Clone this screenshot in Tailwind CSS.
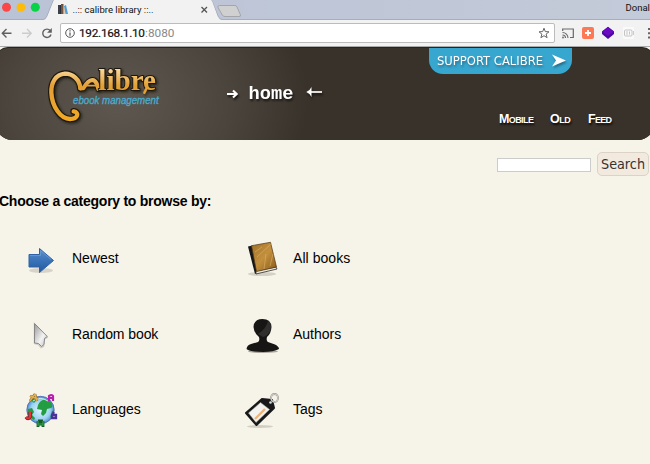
<!DOCTYPE html>
<html lang="en">
<head>
<meta charset="utf-8">
<title>..:: calibre library ::..</title>
<script src="https://cdn.jsdelivr.net/npm/@tailwindcss/browser@4"></script>
</head>
<body class="w-[650px] h-[464px] overflow-hidden bg-[#f6f3e8] font-['Liberation_Sans',Arial,sans-serif] text-black">

<!-- Tab strip -->
<div class="h-5 bg-linear-to-r from-[#bac3d6] to-[#c3cad8]">
  <svg class="block" width="650" height="20" viewBox="0 0 650 20">
    <circle cx="6.5" cy="7.3" r="4.5" fill="#fc4646"/><circle cx="21" cy="7.3" r="4.5" fill="#fdbc0b"/><circle cx="35.3" cy="7.3" r="4.5" fill="#08d348"/>
    <path d="M0 19.5H43Q46 19 47 16L53 1Q54-1 56-1H209Q211-1 212 1L218 16Q219 19 222 19.5H650" fill="none" stroke="#a7adb9"/>
    <path d="M44 20Q46 19 47.5 16L53.500 1L54 0H211L212 1L217.500 16Q219 19 221 20Z" fill="#f2f2f2"/>
    <path d="M219.500 5.500H235Q236.500 5.500 237 7L240.500 15Q241 16.500 239 16.500H225Q223 16.500 222.300 15L218 7.500Q217.300 5.500 219.500 5.500Z" fill="#d0d0d1" stroke="#a3a5aa"/>
    <path d="M58 5h3v9h-3z" fill="#26303c"/><path d="M61 4h2.500v10H61z" fill="#75482f"/><path d="M59 5v9M62 5v9" stroke="#8b7868" stroke-width=".5"/><path d="M64 6l2-1 2 9h-2.500z" fill="#4d9fdc"/><path d="M64 8v6" stroke="#c7a476"/>
    <path d="M201.500 7l5.500 5.500m0-5.500l-5.500 5.500" stroke="#555" stroke-width="1.300"/>
    <text x="72.500" y="13" textLength="81" lengthAdjust="spacingAndGlyphs" font-family="Roboto,sans-serif" font-size="9.500" fill="#111">..:: calibre library ::..</text>
    <text x="625.500" y="11" font-family="Roboto,sans-serif" font-size="9.500" fill="#111">Donald</text>
  </svg>
</div>

<!-- Address bar -->
<div class="flex h-[27px] items-center border-b border-[#aaa] bg-[#f2f2f2]">
  <svg class="shrink-0" width="60" height="26" viewBox="0 20 60 26" fill="none" stroke-width="1.400">
    <path d="M11.500 33.200H2.500M6.500 29L2.300 33.200L6.500 37.400" stroke="#606060"/>
    <path d="M22 33.200H31M27 29L31.200 33.200L27 37.400" stroke="#ccc"/>
    <path d="M50.300 30.700A4.200 4.200 0 1 0 51 34.500" stroke="#606060"/><path d="M51.800 28v4.700h-4.700z" fill="#606060"/>
  </svg>
  <div class="flex h-5 w-[495px] shrink-0 items-center rounded-[2px] border border-[#bcbcbc] bg-white pl-1">
    <svg class="shrink-0" width="10" height="10" viewBox="0 0 10 10"><circle cx="5" cy="5" r="4.300" fill="none" stroke="#555"/><path d="M5 2.300v1.200M5 4.500v3.300" stroke="#555" stroke-width="1.200"/></svg>
    <svg class="ml-1 shrink-0" width="110" height="18" font-family="Roboto,sans-serif" font-size="11.800"><text x="0" y="13" textLength="66" fill="#111" stroke="#111" stroke-width=".2">192.168.1.10</text><text x="66" y="13" textLength="29.500" fill="#888">:8080</text></svg>
    <svg class="ml-auto mr-1 shrink-0" width="12" height="12" viewBox="0 0 12 12"><path d="M6 1.200L7.300 4.600L11 4.800L8.100 7.100L9.100 10.700L6 8.700L2.900 10.700L3.900 7.100L1 4.800L4.700 4.600Z" fill="none" stroke="#666"/></svg>
  </div>
  <svg class="shrink-0" width="95" height="26" viewBox="555 20 95 26" fill="none">
    <path d="M562.700 31V29H573.300V37.500H570" stroke="#686868" stroke-width="1.200"/><path d="M562.500 32.500A5.500 5.500 0 0 1 568 38M562.500 35A3 3 0 0 1 565.500 38" stroke="#686868" stroke-width="1.100"/><circle cx="563" cy="37.500" r=".9" fill="#686868"/>
    <rect x="582" y="27" width="12" height="12" rx="2" fill="#fb7a55"/><path d="M588 30v6M585 33h6" stroke="#fff" stroke-width="1.800"/>
    <path d="M608 26.800L614 31.500V34L608 39L602 34V31.500Z" fill="#4c08a0"/><path d="M608 27L614 31.500L608 36L602 31.500Z" fill="#6a09c2"/>
    <rect x="623" y="27" width="11" height="12" rx="1" fill="#fafafa"/><rect x="624.500" y="30" width="7.500" height="6" rx="1" stroke="#c3c3c3"/><path d="M627 31v4M629.500 31.500v3" stroke="#c3c3c3"/><path d="M633.500 31v4" stroke="#ccc"/>
    <path d="M648 28h2v2h-2zM648 32.300h2v2h-2zM648 36.600h2v2h-2z" fill="#666"/>
  </svg>
</div>

<!-- Site header -->
<header class="-mx-1 flex h-[93px] rounded-b-[16px] rounded-t-[12px] border-t border-[#29231f] bg-[#39322b] bg-[radial-gradient(ellipse_190px_150px_at_122px_52px,#5e5850_0%,#4b443d_60%,#39322b_100%)]">
  <svg class="ml-[34px] mt-0.5 shrink-0" width="150" height="90" viewBox="0 0 450 270">
    <defs>
      <linearGradient id="gold" gradientUnits="userSpaceOnUse" x1="0" y1="60" x2="0" y2="215"><stop offset="0" stop-color="#f9d797"/><stop offset=".3" stop-color="#e3a034"/><stop offset="1" stop-color="#efa927"/></linearGradient>
      <filter id="soft" x="-20%" y="-20%" width="150%" height="150%"><feDropShadow dx="4" dy="4" stdDeviation="3" flood-color="#161310" flood-opacity=".8"/></filter>
    </defs>
    <g filter="url(#soft)" stroke-linecap="round" stroke-linejoin="round" fill="none">
      <path d="M151 115C149 88 128 71 105 71C77 73 63 98 64 128C66 170 92 207 120 207C144 207 149 187 131 184" stroke="#1e1710" stroke-width="20"/>
      <path d="M151 115H160C169 99 176 91 187 90C199 91 202 104 205 117M171 106H198" stroke="#1e1710" stroke-width="18"/>
      <path d="M151 115C149 88 128 71 105 71C77 73 63 98 64 128C66 170 92 207 120 207C144 207 149 187 131 184" stroke="url(#gold)" stroke-width="13"/>
      <path d="M151 115H160C169 99 176 91 187 90C199 91 202 104 205 117" stroke="url(#gold)" stroke-width="12"/><path d="M171 107H198" stroke="#daa13e" stroke-width="5"/>
      <text x="205" y="121" textLength="173" lengthAdjust="spacingAndGlyphs" font-family="Liberation Serif,serif" font-weight="bold" font-size="87" fill="url(#gold)" stroke="#1e1710" stroke-width="6" paint-order="stroke">libre</text>
      <path d="M349 116L343 128" stroke="url(#gold)" stroke-width="7"/>
    </g>
    <text x="129" y="161" textLength="257" lengthAdjust="spacingAndGlyphs" font-family="Liberation Sans,sans-serif" font-style="italic" font-size="33" fill="#48acd0" stroke="#48acd0" stroke-width="1">ebook management</text>
  </svg>
  <svg class="ml-[40px] mt-8 shrink-0 drop-shadow-[1px_2px_1px_#17130f]" width="110" height="30" viewBox="220 80 110 30">
    <path d="M227 94H236.500M233 90.500L236.700 94L233 97.500" fill="none" stroke="#fff" stroke-width="2.100"/>
    <text x="248.500" y="98.500" textLength="45" lengthAdjust="spacingAndGlyphs" font-family="Courier New,Liberation Mono,monospace" font-weight="bold" font-size="18.500" fill="#fff">home</text>
    <path d="M309 92H322" stroke="#fff" stroke-width="1.700"/><path d="M306.300 92Q310 90.500 311.500 87L311.500 97Q310 93.500 306.300 92Z" fill="#fff"/>
  </svg>
  <div class="ml-[98px] flex w-[222px] shrink-0 flex-col">
    <a class="ml-px flex h-[26px] w-[143px] items-center rounded-b-[14px] bg-[#38a7d0]">
      <svg width="143" height="26" class="drop-shadow-[1px_2px_1px_#17465a99]"><text x="8" y="17" textLength="106" lengthAdjust="spacingAndGlyphs" font-family="DejaVu Sans,sans-serif" font-size="12" fill="#fff">SUPPORT CALIBRE</text><path d="M123 6.500L137 12.500L123 18.500L127 12.500Z" fill="#fff"/></svg>
    </a>
    <nav class="mt-[35px] flex pl-[71px] text-[12.5px] leading-5 font-bold text-white [font-variant:small-caps] text-shadow-[1px_2px_2px_#0d0b09]">
      <span class="w-[51px] tracking-[-0.6px]">Mobile</span><span class="w-[38px] tracking-[-0.5px]">Old</span><span class="tracking-[-0.7px]">Feed</span>
    </nav>
  </div>
</header>

<!-- Search -->
<form class="mt-[11px] flex h-[25px] items-center justify-end gap-1.5 pr-px">
  <input class="mt-0.5 h-[14px] w-[94px] border border-[#ccc] bg-white" aria-label="Search">
  <button type="button" class="h-6 w-[52px] rounded-[5px] border border-[#dcd2c6] bg-[#f3eadf] font-['DejaVu_Sans',sans-serif] text-[#333]"><svg width="50" height="22"><text x="3" y="16" textLength="44" lengthAdjust="spacingAndGlyphs" font-size="13.300" fill="#333">Search</text></svg></button>
</form>

<h2 class="-ml-px mt-[15px] h-5 text-sm leading-5 font-bold tracking-[-0.26px]">Choose a category to browse by:</h2>

<!-- Categories -->
<main class="mt-[29px] grid grid-cols-[221px_221px] auto-rows-[75.5px] pl-[22px] text-sm">
  <div class="flex h-10 items-center"><svg width="36" height="40" viewBox="22 240 36 40">
    <defs><linearGradient id="blue" x2="0" y2="1"><stop stop-color="#5d91cd"/><stop offset=".5" stop-color="#3b73b8"/><stop offset="1" stop-color="#2258a0"/></linearGradient></defs>
    <ellipse cx="41" cy="270.500" rx="12" ry="2.500" fill="#d7d3c8"/><path d="M29 254.500H39.500V248.500L53.500 260.500L39.500 272.500V267H29Z" fill="url(#blue)" stroke="#2e62a5"/><path d="M30 255.500H40.500V250.500L51 259.500" fill="none" stroke="#719ed0" stroke-width=".7"/></svg><span class="-mt-1 ml-[14px]">Newest</span></div>
  <div class="flex h-10 items-center"><svg width="36" height="40" viewBox="243 240 36 40">
    <defs><linearGradient id="book" x2="1" y2="1"><stop stop-color="#a16f27"/><stop offset=".5" stop-color="#c3913d"/><stop offset="1" stop-color="#895719"/></linearGradient></defs>
    <ellipse cx="262" cy="274" rx="14" ry="2" fill="#d5d0c5"/><path d="M248 246.500L252.500 245.500L258 272L255 274Z" fill="#171717"/><path d="M256 271L276 267L277 269L256 274Z" fill="#ece9e1" stroke="#302c26" stroke-width=".8"/><path d="M251.500 245.700L270.500 242.300L276.500 267L256.500 271.500Z" fill="url(#book)" stroke="#4d3717" stroke-width=".7"/><path d="M257 257l14-13M264 269l2-15M270 266l3-12M262 247l-7 5" stroke="#e0bc77" stroke-width=".5"/></svg><span class="-mt-1 ml-[14px] tracking-[0.05px]">All books</span></div>

  <div class="flex h-10 items-center"><svg width="36" height="40" viewBox="22 315 36 40">
    <defs><linearGradient id="cursor" x2="1" y2="1"><stop stop-color="#999"/><stop offset=".6" stop-color="#f3f3f3"/><stop offset="1" stop-color="#bbb"/></linearGradient></defs>
    <path d="M34.500 323L47 336.500L44 338L43.500 345.500L41 346.500L38.500 343.500L34.500 342.500Z" fill="#d2cec4" stroke="#d2cec4" stroke-width="1.500"/><path d="M34.500 322.500L47.300 335.500L44.500 337.500L44 343.500L41.500 345.500L38.500 342.500L34.500 342Z" fill="url(#cursor)" stroke="#888" stroke-linejoin="round"/></svg><span class="-mt-1 ml-[14px] tracking-[-0.08px]">Random book</span></div>
  <div class="flex h-10 items-center"><svg width="36" height="40" viewBox="243 315 36 40">
    <ellipse cx="263" cy="350.500" rx="15" ry="1.500" fill="#aaa69e"/><path d="M259 336Q254 332 253.500 326Q254 318 262.500 318Q271 318 271.500 326Q271 333 267 336Q266 340 268 341L275 343.500Q279 345.500 279 348Q274 351 263 351Q250 351 246.500 348Q247 344 251 343L258 341Q260 340 259 336Z" fill="#171615"/><path d="M258 333Q267 327 268 319.500Q272 323 270.500 329Q268 335 263 336Z" fill="#302f2e"/></svg><span class="-mt-1 ml-[14px]">Authors</span></div>

  <div class="flex h-10 items-center"><svg width="36" height="40" viewBox="22 391 36 40">
    <defs><radialGradient id="globe"><stop stop-color="#e1f6ff"/><stop offset=".7" stop-color="#9dd2f3"/><stop offset="1" stop-color="#4e8bd3"/></radialGradient></defs>
    <circle cx="40.500" cy="410" r="13.700" fill="url(#globe)" stroke="#4767b1" stroke-width=".8"/><path d="M38 405q2-5 8-6l5 3q3 5 0 6l-4 1-1 4-3 3-2-2 1-4-5-1z" fill="#239c42"/><path d="M28 409l4-1 2 4-2 3 3 3-1 2q-5-3-6-8zM31 400l4-3 3 1-4 5zM52 411l2-1-1 6-3 2z" fill="#279746"/><path d="M33 401q7-5 15 0" fill="none" stroke="#d7f2e9"/>
    <path d="M30 396l8 3M35 394l-5 7M35 394l2 7" stroke="#765625" stroke-width="2.400"/><path d="M30 396l8 3M35 394l-5 7M35 394l2 7" stroke="#e1ae50" stroke-width="1.500"/>
    <path d="M49 401v-5q3-2 4 0v5M49 398h4" fill="none" stroke="#ba1cb0" stroke-width="2.200"/>
    <path d="M30 412v5q-2 3-4 0" fill="none" stroke="#7c1920" stroke-width="3.300"/><path d="M30 412v5q-2 3-4 0" fill="none" stroke="#ed3031" stroke-width="2"/>
    <path d="M54 412l-2 3v3h4v-3h-3" fill="none" stroke="#4b329b" stroke-width="2.300"/><path d="M38 421h5M38 424h5M38 421v6M43 421v6" fill="none" stroke="#115d27" stroke-width="2.800"/><path d="M38 421v5M43 421v5M38 424h5" stroke="#32a14c" stroke-width="1.200"/></svg><span class="-mt-1 ml-[14px] tracking-[-0.08px]">Languages</span></div>
  <div class="flex h-10 items-center"><svg width="36" height="40" viewBox="243 391 36 40">
    <ellipse cx="260" cy="426.500" rx="13" ry="1.500" fill="#d2cec3"/><path d="M262 399L272 400L274 408L256.500 425L246 413Z" fill="#181818" stroke="#181818" stroke-width="2" stroke-linejoin="round"/><path d="M260.500 402.500L269.500 409.500L256 422.500L248.500 413Z" fill="#f3f2ef" stroke="#aaa" stroke-width=".5"/><path d="M255 419L265 409" stroke="#eeb277" stroke-width="2.300"/><circle cx="270.500" cy="402.500" r="1.300" fill="#ddd"/><ellipse cx="274.500" cy="398" rx="3.500" ry="4" fill="none" stroke="#96938d" stroke-width="1.800"/><ellipse cx="274.500" cy="398" rx="3.500" ry="4" fill="none" stroke="#e2e1de" stroke-width=".8"/></svg><span class="-mt-1 ml-[14px]">Tags</span></div>
</main>
</body>
</html>
